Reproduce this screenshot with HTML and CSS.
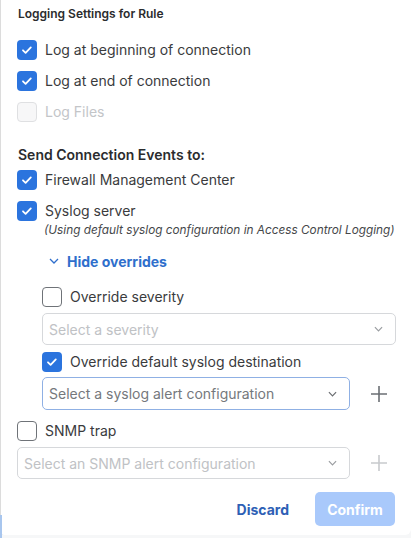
FILE: index.html
```html
<!DOCTYPE html>
<html>
<head>
<meta charset="utf-8">
<link rel="stylesheet" href="styles.css">
</head>
<body>
<div class="frame">
  <div class="panel">
    <div class="title">Logging Settings for Rule</div>

    <label class="row m-first"><span class="cb checked"><svg viewBox="0 0 20 20"><path d="M6 10.3l2.6 2.5 5.2-5.4"/></svg></span><span>Log at beginning of connection</span></label>
    <label class="row m-11"><span class="cb checked"><svg viewBox="0 0 20 20"><path d="M6 10.3l2.6 2.5 5.2-5.4"/></svg></span><span>Log at end of connection</span></label>
    <label class="row m-11 disabled"><span class="cb off"></span><span>Log Files</span></label>

    <div class="section">Send Connection Events to:</div>

    <label class="row m-6"><span class="cb checked"><svg viewBox="0 0 20 20"><path d="M6 10.3l2.6 2.5 5.2-5.4"/></svg></span><span>Firewall Management Center</span></label>
    <label class="row m-11"><span class="cb checked"><svg viewBox="0 0 20 20"><path d="M6 10.3l2.6 2.5 5.2-5.4"/></svg></span><span>Syslog server</span></label>
    <div class="note">(Using default syslog configuration in Access Control Logging)</div>

    <div class="toggle"><svg viewBox="0 0 10 6"><path d="M1 1l4 4 4-4"/></svg><span>Hide overrides</span></div>

    <div class="indent">
      <label class="row m-17"><span class="cb empty"></span><span>Override severity</span></label>
      <div class="select m-6 full"><span>Select a severity</span><svg viewBox="0 0 10 6"><path d="M1 1l4 4 4-4"/></svg></div>
      <label class="row m-7"><span class="cb checked"><svg viewBox="0 0 20 20"><path d="M6 10.3l2.6 2.5 5.2-5.4"/></svg></span><span>Override default syslog destination</span></label>
      <div class="selrow m-5">
        <div class="select active"><span>Select a syslog alert configuration</span><svg viewBox="0 0 10 6"><path d="M1 1l4 4 4-4"/></svg></div>
        <svg class="plus" viewBox="0 0 16 16"><path d="M8 0v16M0 8h16"/></svg>
      </div>
    </div>

    <label class="row m-11"><span class="cb empty"></span><span>SNMP trap</span></label>
    <div class="selrow m-6">
      <div class="select"><span>Select an SNMP alert configuration</span><svg viewBox="0 0 10 6"><path d="M1 1l4 4 4-4"/></svg></div>
      <svg class="plus light" viewBox="0 0 16 16"><path d="M8 0v16M0 8h16"/></svg>
    </div>

    <div class="footer">
      <button class="discard">Discard</button>
      <button class="confirm">Confirm</button>
    </div>
  </div>
  <div class="edge"></div>
</div>
</body>
</html>
```

FILE: styles.css
```css
* { box-sizing: border-box; }
html, body {
  margin: 0;
  padding: 0;
  background: #ffffff;
}
body {
  font-family: Inter, "Noto Sans", "Liberation Sans", sans-serif;
  color: #3a3b3d;
  width: 411px;
  height: 538px;
  overflow: hidden;
}
.frame {
  position: relative;
  width: 411px;
  height: 538px;
  background: #f6f7f8;
}
.panel {
  height: 535px;
  background: #fff;
  border-left: 1px solid #dcdcdc;
  border-bottom-right-radius: 6px;
  border-bottom-left-radius: 4px;
  padding: 6px 16px 0 16px;
  display: flex;
  flex-direction: column;
  align-items: flex-start;
}
.edge {
  position: absolute;
  left: 0;
  top: 515px;
  width: 2px;
  height: 23px;
  background: #a8c6ee;
}
.title {
  font-size: 12px;
  line-height: 16px;
  font-weight: 600;
  color: #2b2c2e;
  margin-left: 1px;
}
.row {
  display: flex;
  align-items: center;
  gap: 8px;
  height: 20px;
  font-size: 14px;
  line-height: 20px;
  color: #3a3b3d;
}
.row .cb { flex: none; }
.cb {
  width: 20px;
  height: 20px;
  border-radius: 4px;
  display: inline-flex;
  align-items: center;
  justify-content: center;
}
.cb.checked { background: #2b74de; }
.cb svg { width: 20px; height: 20px; }
.cb svg path {
  fill: none;
  stroke: #fff;
  stroke-width: 1.8;
  stroke-linecap: round;
  stroke-linejoin: round;
}
.cb.empty { border: 1.5px solid #6f7378; background: #fff; }
.cb.off { border: 1.5px solid #dfe0e2; background: #f7f7f8; }
.disabled { color: #c3c5c8; }
.m-first { margin-top: 18px; }
.m-5 { margin-top: 5px; }
.m-6 { margin-top: 6px; }
.m-7 { margin-top: 7px; }
.m-11 { margin-top: 11px; }
.m-17 { margin-top: 17px; }
.section {
  margin-top: 24px;
  margin-left: 1px;
  font-size: 14px;
  line-height: 18px;
  font-weight: 600;
  color: #2b2c2e;
}
.note {
  margin-top: 2px;
  margin-left: 27px;
  font-size: 11.8px;
  line-height: 14px;
  font-style: italic;
  color: #45474a;
  white-space: nowrap;
}
.toggle {
  margin-top: 15px;
  margin-left: 32px;
  display: flex;
  align-items: center;
  gap: 8px;
  height: 18px;
  font-size: 14px;
  font-weight: 700;
  color: #2f6fcc;
}
.toggle svg { width: 10px; height: 6px; }
.toggle svg path { fill: none; stroke: #2f6fcc; stroke-width: 1.3; }
.indent {
  margin-left: 25px;
  display: flex;
  flex-direction: column;
  align-items: flex-start;
}
.select {
  width: 333px;
  height: 32px;
  border: 1.5px solid #d6d8db;
  border-radius: 5px;
  display: flex;
  align-items: center;
  justify-content: space-between;
  padding: 0 12px 0 6px;
  font-size: 14px;
  color: #c0c2c5;
  background: #fff;
}
.select.full { width: 354px; }
.select.active {
  width: 308px;
  height: 33px;
  border-color: #8fb0e4;
  color: #75787c;
}
.select svg { width: 9px; height: 6px; }
.select svg path { fill: none; stroke: #9a9da1; stroke-width: 1.3; }
.select.active svg path { stroke: #6a6d71; }
.selrow {
  display: flex;
  align-items: center;
  gap: 21px;
}
.plus { width: 16px; height: 16px; }
.plus path { stroke: #6b6f74; stroke-width: 1.6; fill: none; }
.plus.light path { stroke: #c8cacd; }
.footer {
  margin-top: 13px;
  align-self: stretch;
  display: flex;
  justify-content: flex-end;
  align-items: center;
  gap: 26px;
}
button {
  font-family: inherit;
  font-size: 14px;
  font-weight: 700;
  border: none;
  cursor: pointer;
}
.discard {
  background: none;
  color: #2e5fb5;
  padding: 0;
}
.confirm {
  width: 80px;
  height: 34px;
  border-radius: 5px;
  background: #a9c9fb;
  color: #fff;
}
```
